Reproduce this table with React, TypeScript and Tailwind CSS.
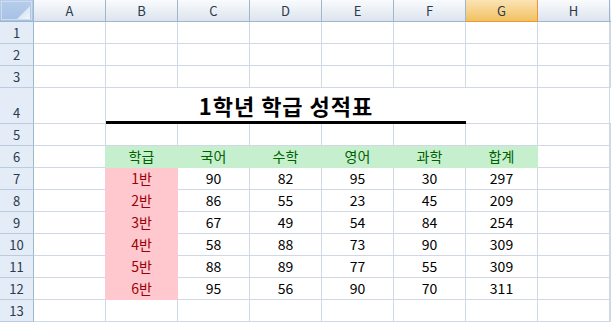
import React from "react";

const COLS = ["A", "B", "C", "D", "E", "F", "G", "H"];
const GRID = "#d0d7e5";
const GREEN = "#c6efce";
const PINK = "#ffc7ce";

const subjects = ["학급", "국어", "수학", "영어", "과학", "합계"];
const scores = [
  ["1반", "90", "82", "95", "30", "297"],
  ["2반", "86", "55", "23", "45", "209"],
  ["3반", "67", "49", "54", "84", "254"],
  ["4반", "58", "88", "73", "90", "309"],
  ["5반", "88", "89", "77", "55", "309"],
  ["6반", "95", "56", "90", "70", "311"],
];

// fill for a cell at (row, col index 0 = A)
function fillOf(r: number, c: number): string | null {
  if (r === 6 && c >= 1 && c <= 6) return GREEN;
  if (r >= 7 && r <= 12 && c === 1) return PINK;
  return null;
}

function textOf(r: number, c: number): string {
  if (r === 6 && c >= 1 && c <= 6) return subjects[c - 1];
  if (r >= 7 && r <= 12 && c >= 1 && c <= 6) return scores[r - 7][c - 1];
  return "";
}

function Corner() {
  return (
    <div className="h-[22px] border-r border-b border-[#9eb6ce] bg-gradient-to-b from-[#b7cdea] to-[#a6c1e6] p-px">
      <div className="h-full w-full border border-[#cfddf1] relative">
        <svg width="32" height="20" className="absolute left-0 top-0" viewBox="0 0 32 20">
          <defs>
            <linearGradient id="tri" x1="0" y1="0" x2="1" y2="1">
              <stop offset="0" stopColor="#c4d6ee" />
              <stop offset="1" stopColor="#f4f7fb" />
            </linearGradient>
          </defs>
          <polygon points="15,17 28,17 28,4" fill="url(#tri)" />
        </svg>
      </div>
    </div>
  );
}

export default function App() {
  const rows = Array.from({ length: 13 }, (_, i) => i + 1);

  return (
    <div className="w-[611px] h-[324px] overflow-hidden bg-white font-['Noto_Sans_CJK_KR','Noto_Sans',sans-serif]">
      <div className="grid grid-cols-[34px_repeat(8,72px)_1fr]">
        {/* column headers */}
        <Corner />
        {COLS.map((c) =>
          c === "G" ? (
            <div
              key={c}
              className="h-[22px] flex items-center justify-center border-r border-b border-[#f29536] bg-gradient-to-b from-[#fbe3b4] to-[#f1c15f] text-[13px] text-[#2b3a4c]"
            >
              {c}
            </div>
          ) : (
            <div
              key={c}
              className="h-[22px] flex items-center justify-center border-r border-b border-[#9eb6ce] bg-gradient-to-b from-[#f9fbfd] to-[#dde4ee] text-[13px] text-[#2b3a4c]"
            >
              {c}
            </div>
          )
        )}
        <div className="h-[22px] border-b border-[#9eb6ce] bg-gradient-to-b from-[#f9fbfd] to-[#dde4ee]" />

        {rows.map((r) => {
          const h = r === 4 ? "h-[36px]" : "h-[22px]";
          const cells: React.ReactNode[] = [];
          cells.push(
            <div
              key={`h${r}`}
              className={`${h} flex items-end justify-center pb-[2px] border-r border-r-[#9eb6ce] border-b border-b-[#bccbdd] bg-[#e4ecf7] text-[13px] leading-[17px] text-[#2b3a4c]`}
            >
              {r}
            </div>
          );

          if (r === 4) {
            cells.push(
              <div key="a4" className={`${h} border-r border-b`} style={{ borderColor: GRID }} />
            );
            cells.push(
              <div
                key="title"
                className="col-span-5 h-[36px] flex items-center justify-center pt-[2px] border-b-[3px] border-black text-[22px] font-bold text-black tracking-[1px]"
              >
                1학년 학급 성적표
              </div>
            );
            cells.push(<div key="g4" className={`${h} border-r border-b`} style={{ borderColor: GRID }} />);
            cells.push(<div key="h4" className={`${h} border-r border-b`} style={{ borderColor: GRID }} />);
            cells.push(<div key="i4" className={`${h} border-b`} style={{ borderColor: GRID }} />);
            return cells;
          }

          for (let c = 0; c < 9; c++) {
            const fill = c < 8 ? fillOf(r, c) : null;
            const rightFill = c < 7 ? fillOf(r, c + 1) : null;
            const right = fill ?? rightFill ?? GRID;
            const bottom = fill ?? GRID;
            const txt = c < 8 ? textOf(r, c) : "";
            const color = fill === GREEN ? "text-[#006100]" : fill === PINK ? "text-[#9c0006]" : "text-black";
            cells.push(
              <div
                key={`${r}-${c}`}
                className={`${h} flex items-center justify-center border-r border-b text-[14px] ${color}`}
                style={{
                  borderRightColor: right,
                  borderBottomColor: bottom,
                  backgroundColor: fill ?? undefined,
                }}
              >
                {txt}
              </div>
            );
          }
          return cells;
        })}
      </div>
    </div>
  );
}
